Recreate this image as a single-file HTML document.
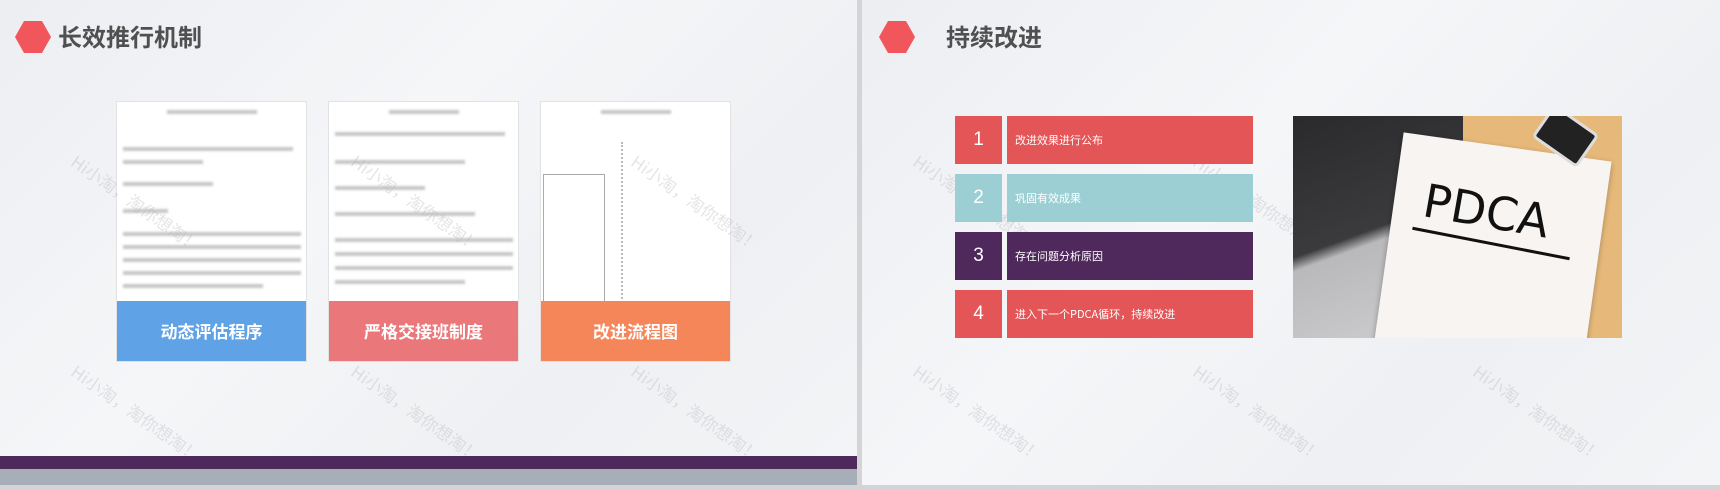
<!DOCTYPE html>
<html><head><meta charset="utf-8"><style>
*{margin:0;padding:0;box-sizing:border-box}
html,body{width:1720px;height:490px;overflow:hidden}
body{background:#d4d4d6;font-family:"Liberation Sans","Noto Sans CJK SC",sans-serif;position:relative}
.slide{position:absolute;top:0;height:485px;background:linear-gradient(135deg,#eceef2 0%,#f5f6f8 40%,#eef0f3 70%,#f3f4f6 100%);overflow:hidden}
.hex{position:absolute;width:36px;height:32px;background:#f0565b;clip-path:polygon(25% 0,75% 0,100% 50%,75% 100%,25% 100%,0 50%)}
.title{position:absolute;font-size:24px;font-weight:bold;color:#505050;font-family:"Noto Sans CJK SC",sans-serif}
.card{position:absolute;top:101px;width:191px;height:261px;background:#fff;border:1px solid #e2e2e2;overflow:hidden}
.card .ln{position:absolute;left:6px;height:4px;background:#c8c8c8;filter:blur(1px)}
.card .lab{position:absolute;left:0;right:0;bottom:0;height:60px;color:#fff;font-size:17px;font-weight:bold;text-align:center;line-height:60px;font-family:"Noto Sans CJK SC",sans-serif}
.num{position:absolute;left:955px;width:47px;color:#fff;font-size:19px;text-align:center}
.txt{position:absolute;left:1007px;width:246px;color:#fff;font-size:11px;padding-left:8px;font-family:"Noto Sans CJK SC",sans-serif}
.wm{position:absolute;color:rgba(180,180,190,.35);font-size:17px;transform:rotate(35deg);font-family:"Noto Sans CJK SC",sans-serif;white-space:nowrap}
</style></head><body>
<div class="slide" style="left:0;width:857px">
 <div class="hex" style="left:15px;top:21px"></div>
 <div class="title" style="left:58px;top:24px;line-height:1">长效推行机制</div>
 <div class="card" style="left:116px">
  <div class="ln" style="top:8px;left:50px;width:90px"></div>
  <div class="ln" style="top:45px;width:170px"></div><div class="ln" style="top:58px;width:80px"></div>
  <div class="ln" style="top:80px;width:90px"></div><div class="ln" style="top:107px;width:45px"></div>
  <div class="ln" style="top:130px;width:178px"></div><div class="ln" style="top:143px;width:178px"></div><div class="ln" style="top:156px;width:178px"></div><div class="ln" style="top:169px;width:178px"></div><div class="ln" style="top:182px;width:140px"></div>
  <div class="ln" style="top:225px;width:178px"></div><div class="ln" style="top:238px;width:120px"></div>
  <div class="lab" style="background:#5fa2e6">动态评估程序</div></div>
 <div class="card" style="left:328px">
  <div class="ln" style="top:8px;left:60px;width:70px"></div>
  <div class="ln" style="top:30px;width:170px"></div><div class="ln" style="top:58px;width:130px"></div><div class="ln" style="top:84px;width:90px"></div><div class="ln" style="top:110px;width:140px"></div>
  <div class="ln" style="top:136px;width:178px"></div><div class="ln" style="top:150px;width:178px"></div><div class="ln" style="top:164px;width:178px"></div><div class="ln" style="top:178px;width:130px"></div>
  <div class="ln" style="top:206px;width:150px"></div><div class="ln" style="top:232px;width:170px"></div>
  <div class="lab" style="background:#ea787a">严格交接班制度</div></div>
 <div class="card" style="left:540px">
  <div class="ln" style="top:8px;left:60px;width:70px"></div>
  <div style="position:absolute;left:2px;top:72px;width:62px;height:210px;border:1px solid #aaa"></div>
  <div style="position:absolute;left:80px;top:40px;width:30px;height:200px;border-left:2px dotted #bbb"></div>
  <div style="position:absolute;left:8px;top:300px;width:170px;height:60px;border:1px solid #ccc"></div>
  <div class="lab" style="background:#f5865a">改进流程图</div></div>
 <div class="wm" style="left:60px;top:190px">Hi小淘，淘你想淘！</div>
 <div class="wm" style="left:340px;top:190px">Hi小淘，淘你想淘！</div>
 <div class="wm" style="left:620px;top:190px">Hi小淘，淘你想淘！</div>
 <div class="wm" style="left:60px;top:400px">Hi小淘，淘你想淘！</div>
 <div class="wm" style="left:340px;top:400px">Hi小淘，淘你想淘！</div>
 <div class="wm" style="left:620px;top:400px">Hi小淘，淘你想淘！</div>
 <div style="position:absolute;left:0;top:456px;width:857px;height:13px;background:#4d2a5b"></div>
 <div style="position:absolute;left:0;top:469px;width:857px;height:16px;background:#a8aeb8"></div>
</div>
<div class="slide" style="left:862px;width:858px;height:485px">
 <div class="hex" style="left:17px;top:21px"></div>
 <div class="title" style="left:84px;top:24px;line-height:1">持续改进</div>
 <div class="wm" style="left:40px;top:190px">Hi小淘，淘你想淘！</div>
 <div class="wm" style="left:320px;top:190px">Hi小淘，淘你想淘！</div>
 <div class="wm" style="left:600px;top:190px">Hi小淘，淘你想淘！</div>
 <div class="wm" style="left:40px;top:400px">Hi小淘，淘你想淘！</div>
 <div class="wm" style="left:320px;top:400px">Hi小淘，淘你想淘！</div>
 <div class="wm" style="left:600px;top:400px">Hi小淘，淘你想淘！</div>
</div>
<div class="num" style="top:116px;height:48px;line-height:48px;background:#e45557">1</div>
<div class="txt" style="top:116px;height:48px;line-height:48px;background:#e45557">改进效果进行公布</div>
<div class="num" style="top:174px;height:48px;line-height:48px;background:#9bcfd4">2</div>
<div class="txt" style="top:174px;height:48px;line-height:48px;background:#9bcfd4">巩固有效成果</div>
<div class="num" style="top:232px;height:48px;line-height:48px;background:#50295c">3</div>
<div class="txt" style="top:232px;height:48px;line-height:48px;background:#50295c">存在问题分析原因</div>
<div class="num" style="top:290px;height:48px;line-height:48px;background:#e45557">4</div>
<div class="txt" style="top:290px;height:48px;line-height:48px;background:#e45557">进入下一个PDCA循环，持续改进</div>
<div style="position:absolute;left:1293px;top:116px;width:329px;height:222px;overflow:hidden;background:#e6b97a">
 <div style="position:absolute;left:0;top:0;width:170px;height:222px;background:linear-gradient(160deg,#2a2a2c 0%,#3b3b3e 50%,#b9b9bb 55%,#cfcfd1 100%)"></div>
 <div style="position:absolute;left:95px;top:30px;width:210px;height:210px;background:#f7f4f2;transform:rotate(8deg);box-shadow:0 2px 6px rgba(0,0,0,.3)"></div>
 <div style="position:absolute;left:130px;top:68px;font-size:46px;color:#111;transform:rotate(10deg);font-family:'DejaVu Sans',sans-serif">PDCA</div>
 <div style="position:absolute;left:118px;top:126px;width:160px;height:3px;background:#111;transform:rotate(11deg)"></div>
 <div style="position:absolute;left:245px;top:0;width:55px;height:40px;background:#222;border:3px solid #ddd;border-radius:5px;transform:rotate(35deg)"></div>
</div>
</body></html>
